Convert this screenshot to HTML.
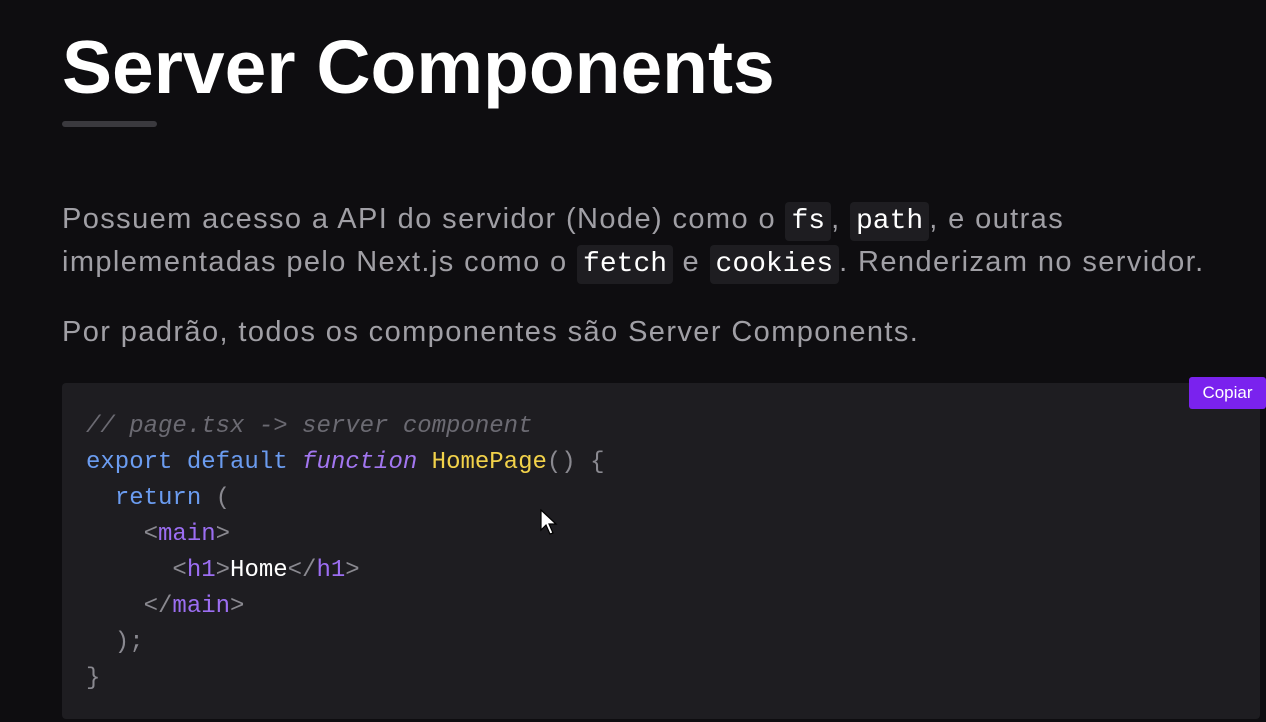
<!DOCTYPE html>
<html><head><style>
html,body{margin:0;padding:0;background:#0e0d10;width:1266px;height:722px;overflow:hidden;font-family:"Liberation Sans",sans-serif}
h1{position:absolute;left:62px;top:22px;margin:0;font-size:75px;font-weight:bold;color:#fff;letter-spacing:0;line-height:90px}
.bar{position:absolute;left:62px;top:121px;width:95px;height:6px;background:#3a393e;border-radius:3px}
p{position:absolute;left:62px;margin:0;font-size:29px;color:#a09fa5;line-height:40px;width:1200px;letter-spacing:1.4px;white-space:nowrap}
code{font-family:"Liberation Mono",monospace;color:#fff;background:#1e1d21;border-radius:4px;padding:4px 6px;font-size:28px;letter-spacing:0}
.code{position:absolute;left:62px;top:383px;width:1198px;height:336px;background:#1e1d21;border-radius:4px}
pre{position:absolute;left:86px;top:409px;margin:0;font-family:"Liberation Mono",monospace;font-size:24px;line-height:36px;color:#8a8990}
.c{color:#6b6a72;font-style:italic}.k{color:#6b9cf0}.f{color:#a276f0;font-style:italic}.y{color:#f2d24a}.t{color:#9c6ef2}.w{color:#fff}
.btn{position:absolute;left:1189px;top:377px;width:77px;height:32px;background:#7a22ee;border-radius:3px;color:#fff;font-size:17px;line-height:32px;text-align:center}
</style></head><body>
<h1>Server Components</h1>
<div class="bar"></div>
<p style="top:199px">Possuem acesso a API do servidor (Node) como o <code>fs</code>, <code>path</code>, e outras<br>implementadas pelo Next.js como o <code>fetch</code> e <code>cookies</code>. Renderizam no servidor.</p>
<p style="top:312px">Por padrão, todos os componentes são Server Components.</p>
<div class="code"></div>
<pre><span class="c">// page.tsx -&gt; server component</span>
<span class="k">export default</span> <span class="f">function</span> <span class="y">HomePage</span>() {
  <span class="k">return</span> (
    &lt;<span class="t">main</span>&gt;
      &lt;<span class="t">h1</span>&gt;<span class="w">Home</span>&lt;/<span class="t">h1</span>&gt;
    &lt;/<span class="t">main</span>&gt;
  );
}</pre>
<div class="btn">Copiar</div>
<svg style="position:absolute;left:540px;top:509px" width="20" height="28" viewBox="0 0 20 28"><path d="M1 1 L1 21 L6 16 L10 25 L13 24 L9 15 L16 15 Z" fill="#fff" stroke="#000" stroke-width="1.2"/></svg>
</body></html>
